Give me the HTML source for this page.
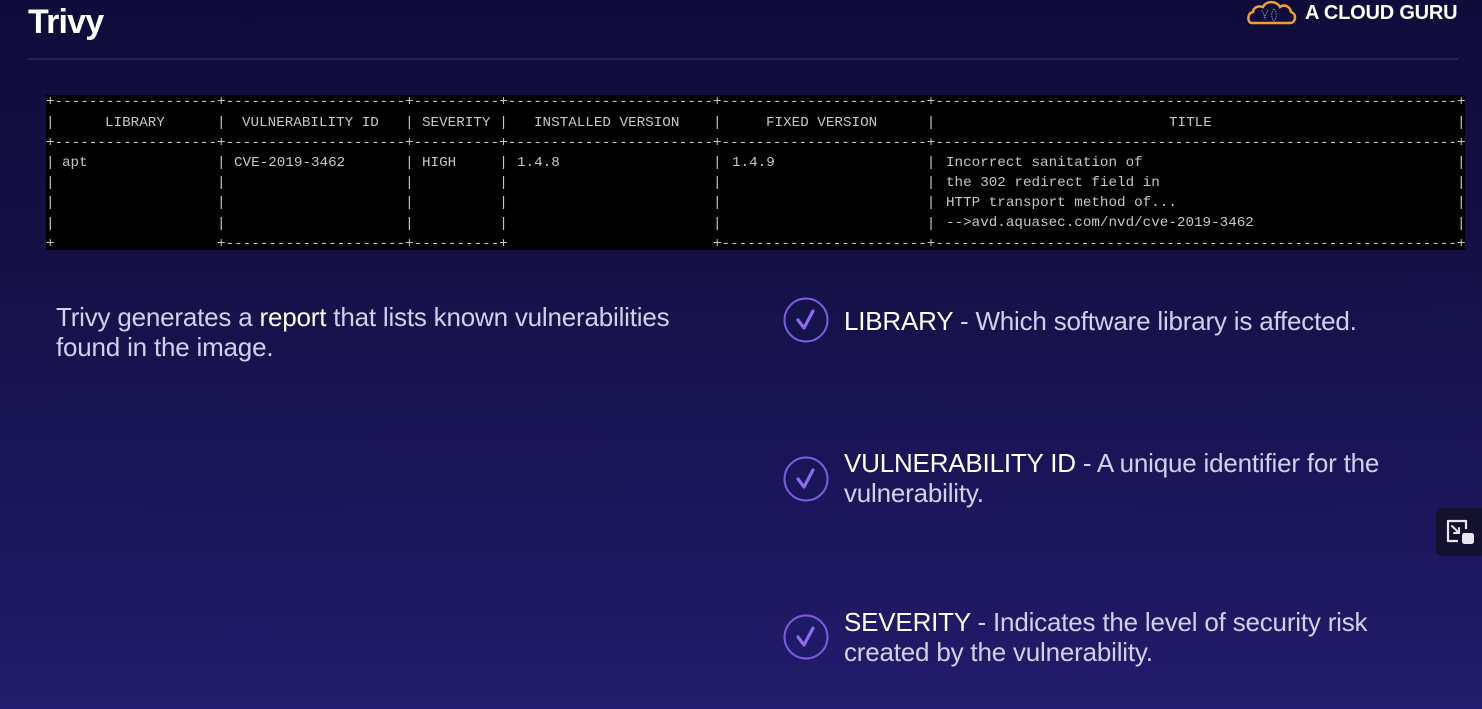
<!DOCTYPE html>
<html><head><meta charset="utf-8"><style>
*{margin:0;padding:0;box-sizing:border-box}
html,body{width:1482px;height:709px;overflow:hidden}
body{background:linear-gradient(180deg,#0f0b3a 0%,#141045 35%,#1b165a 70%,#221c6c 100%);font-family:"Liberation Sans",sans-serif;position:relative;color:#d6d2ee}
.title{position:absolute;left:28px;top:3px;font-size:34px;font-weight:bold;color:#fff;letter-spacing:-0.8px}
.hr{position:absolute;left:28px;top:58px;width:1430px;height:2px;background:#262260}
.logo{position:absolute;left:1305px;top:2px;font-size:20px;font-weight:bold;color:#fff;letter-spacing:-0.2px}
.term{position:absolute;left:46px;top:95px;width:1419px;height:155px;background:#000}
.t{position:absolute;left:46px;font-family:"Liberation Mono",monospace;font-size:14.25px;color:#c6c6c6;white-space:pre;line-height:20px}
.c{position:absolute;font-family:"Liberation Mono",monospace;font-size:14.25px;color:#c6c6c6;white-space:pre;line-height:20px}
.p{position:absolute;font-size:26px;line-height:30px;color:#d4d0ec;letter-spacing:-0.2px;white-space:nowrap}
.p b{font-weight:normal;color:#fff}
.ck{position:absolute;width:46px;height:46px}
.btn{position:absolute;left:1436px;top:508px;width:50px;height:48px;background:#13112e;border-radius:6px}
</style></head><body>
<div class="title">Trivy</div>
<div class="hr"></div>
<svg style="position:absolute;left:1244px;top:0" width="54" height="26" viewBox="0 0 54 26">
<path d="M8 23 H46 C52 23 53 14 47 12 C46 6 40 4 36 7 C33 1 22 0 19 7 C14 5 9 8 9 12 C3 13 3 23 8 23 Z" fill="none" stroke="#f0a030" stroke-width="2.5"/>
<path d="M18 10 L22 20 M24 10 L20 18 M30 9 C27 12 27 18 30 21 C33 18 33 12 30 9" fill="none" stroke="#8a86b0" stroke-width="1" stroke-dasharray="1.5 1"/>
</svg>
<div class="logo">A CLOUD GURU</div>

<div class="term"></div>
<div class="t" style="top:92px">+-------------------+---------------------+----------+------------------------+------------------------+-------------------------------------------------------------+</div>
<div class="t" style="top:113px">|                   |                     |          |                        |                        |                                                             |</div>
<div class="t" style="top:133px">+-------------------+---------------------+----------+------------------------+------------------------+-------------------------------------------------------------+</div>
<div class="t" style="top:153px">|                   |                     |          |                        |                        |                                                             |</div>
<div class="t" style="top:173px">|                   |                     |          |                        |                        |                                                             |</div>
<div class="t" style="top:193px">|                   |                     |          |                        |                        |                                                             |</div>
<div class="t" style="top:214px">|                   |                     |          |                        |                        |                                                             |</div>
<div class="t" style="top:234px">+                   +---------------------+----------+                        +------------------------+-------------------------------------------------------------+</div>

<div class="c" style="left:105px;top:113px">LIBRARY</div>
<div class="c" style="left:242px;top:113px">VULNERABILITY ID</div>
<div class="c" style="left:422px;top:113px">SEVERITY</div>
<div class="c" style="left:534px;top:113px">INSTALLED VERSION</div>
<div class="c" style="left:766px;top:113px">FIXED VERSION</div>
<div class="c" style="left:1169px;top:113px">TITLE</div>
<div class="c" style="left:62px;top:153px">apt</div>
<div class="c" style="left:234px;top:153px">CVE-2019-3462</div>
<div class="c" style="left:422px;top:153px">HIGH</div>
<div class="c" style="left:517px;top:153px">1.4.8</div>
<div class="c" style="left:732px;top:153px">1.4.9</div>
<div class="c" style="left:946px;top:153px">Incorrect sanitation of
the 302 redirect field in
HTTP transport method of...
--&gt;avd.aquasec.com/nvd/cve-2019-3462</div>

<div class="p" style="left:56px;top:302px">Trivy generates a <b>report</b> that lists known vulnerabilities<br>found in the image.</div>

<svg class="ck" style="left:783px;top:297px" viewBox="0 0 46 46"><circle cx="23" cy="23" r="21.5" fill="none" stroke="#7d5be0" stroke-width="2"/><path d="M15 23 L21 31 L30 14" fill="none" stroke="#8e6cf0" stroke-width="3.2" stroke-linecap="round" stroke-linejoin="round"/></svg>
<div class="p" style="left:844px;top:306px"><b>LIBRARY</b> - Which software library is affected.</div>

<svg class="ck" style="left:783px;top:456px" viewBox="0 0 46 46"><circle cx="23" cy="23" r="21.5" fill="none" stroke="#7d5be0" stroke-width="2"/><path d="M15 23 L21 31 L30 14" fill="none" stroke="#8e6cf0" stroke-width="3.2" stroke-linecap="round" stroke-linejoin="round"/></svg>
<div class="p" style="left:844px;top:448px"><b>VULNERABILITY ID</b> - A unique identifier for the<br>vulnerability.</div>

<svg class="ck" style="left:783px;top:614px" viewBox="0 0 46 46"><circle cx="23" cy="23" r="21.5" fill="none" stroke="#7d5be0" stroke-width="2"/><path d="M15 23 L21 31 L30 14" fill="none" stroke="#8e6cf0" stroke-width="3.2" stroke-linecap="round" stroke-linejoin="round"/></svg>
<div class="p" style="left:844px;top:607px"><b>SEVERITY</b> - Indicates the level of security risk<br>created by the vulnerability.</div>

<div class="btn"></div>
<svg style="position:absolute;left:1444px;top:517px" width="34" height="30" viewBox="0 0 34 30">
<path d="M14 24 H4 V4 H22 V12" fill="none" stroke="#e8e6f2" stroke-width="2.2" stroke-linejoin="round"/>
<path d="M8 9 L15 16 M15 11 V16 H10" fill="none" stroke="#e8e6f2" stroke-width="2" stroke-linecap="round"/>
<rect x="18" y="16" width="12" height="11" rx="2.5" fill="#e8e6f2"/>
</svg>
</body></html>
